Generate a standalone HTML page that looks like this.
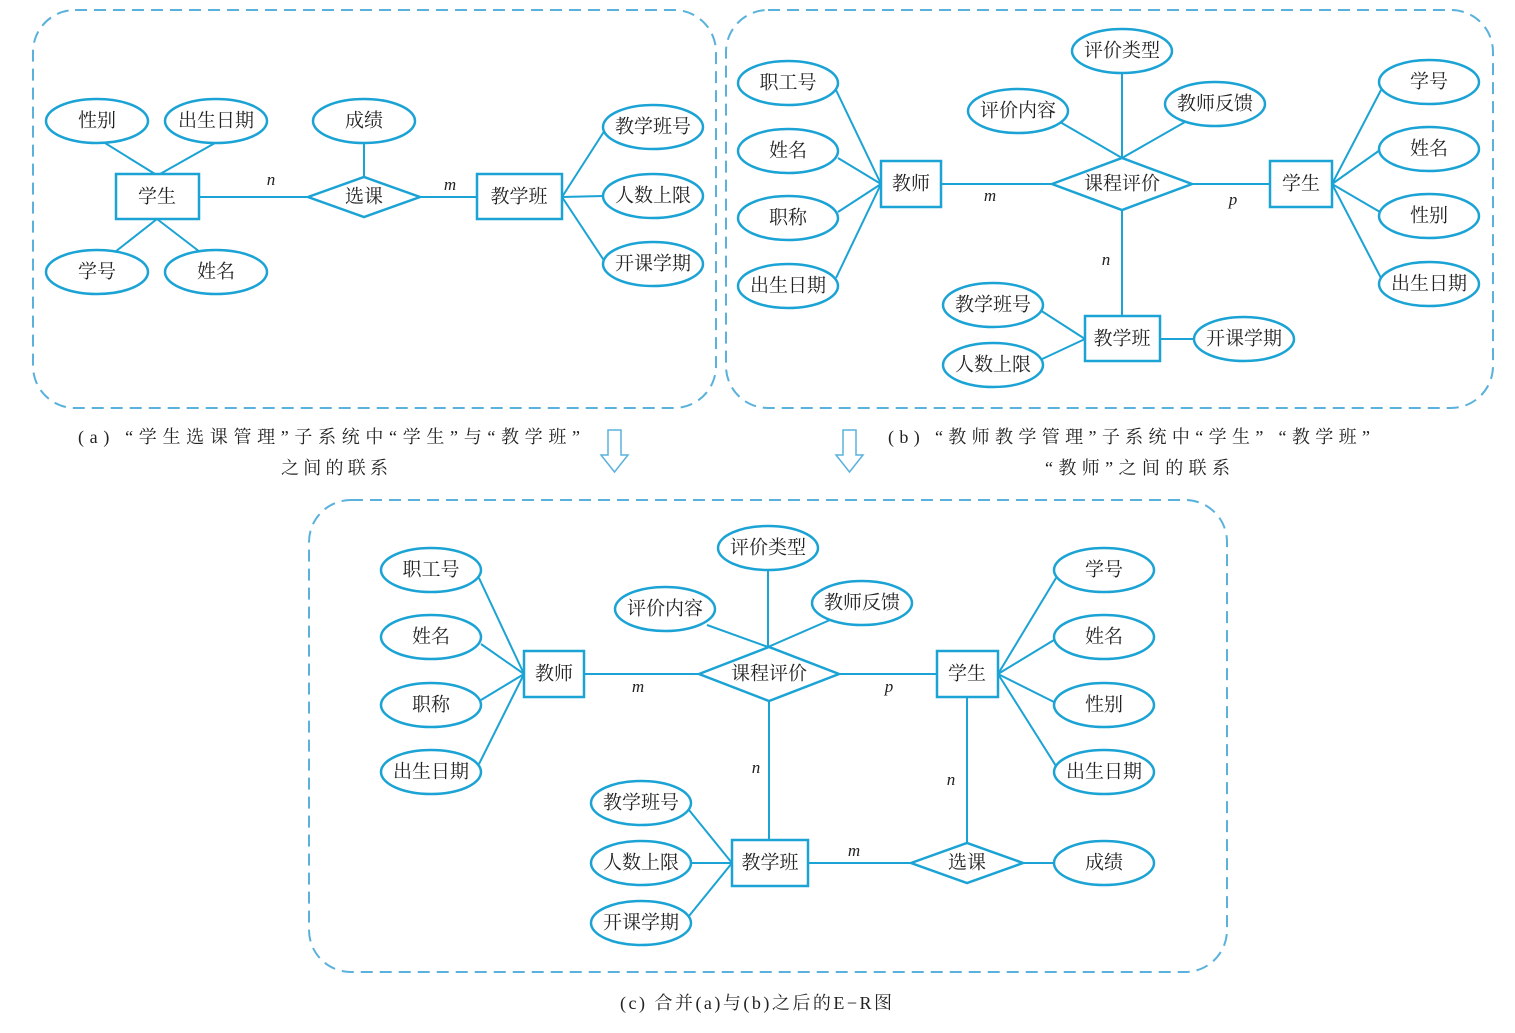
<!DOCTYPE html>
<html><head><meta charset="utf-8"><style>
html,body{margin:0;padding:0;background:#fff;width:1515px;height:1033px;overflow:hidden}
svg{display:block}
text{font-family:"Liberation Serif","Noto Serif CJK SC",serif;fill:#222;font-size:19px}
.l{font-size:19px;text-anchor:middle;dominant-baseline:central}
.i{font-style:italic;font-size:17px;text-anchor:middle}
.c{font-size:18px;font-family:"Liberation Serif","Noto Serif CJK SC",serif}
</style></head><body>
<svg width="1515" height="1033" viewBox="0 0 1515 1033">
<g fill="none" stroke="#5ab2dc" stroke-width="2" stroke-dasharray="12 7">
<rect x="33" y="10" width="683" height="398" rx="42"/>
<rect x="726" y="10" width="767" height="398" rx="42"/>
<rect x="309" y="500" width="918" height="472" rx="42"/>
</g>
<g fill="none" stroke="#1aa3d4" stroke-width="2">
<path d="M105 143L155 174M215 143L160 174M157 219L115 252M157 219L200 252M199 197H308M420 197H477M364 143V177M562 197L605 130M562 197L603 196M562 197L605 262"/>
<path d="M836 90L881 184M838 158L881 184M838 212L881 184M836 278L881 184M941 184H1052M1192 184H1270M1122 73V158M1060 122L1122 158M1185 122L1122 158M1332 184L1381 90M1332 184L1380 150M1332 184L1380 212M1332 184L1381 278M1122 210V316M1040 310L1085 339M1040 360L1085 339M1160 339H1194"/>
<path d="M479 578L524 674M481 644L524 674M481 700L524 674M479 764L524 674M584 674H699M839 674H937M768 570V647M707 625L768 647M830 620L768 647M998 674L1056 578M998 674L1054 640M998 674L1054 702M998 674L1056 766M769 701V840M967 697V843M689 810L732 863M691 863H732M689 916L732 863M808 863H911M1023 863H1054"/>
</g>
<g fill="#fff" stroke="#1aa3d4" stroke-width="2.5">
<ellipse cx="97" cy="121" rx="51" ry="22"/><ellipse cx="216" cy="121" rx="51" ry="22"/>
<ellipse cx="97" cy="272" rx="51" ry="22"/><ellipse cx="216" cy="272" rx="51" ry="22"/>
<ellipse cx="364" cy="121" rx="51" ry="22"/>
<rect x="116" y="174" width="83" height="45"/>
<polygon points="308,197 364,177 420,197 364,217"/>
<rect x="477" y="174" width="85" height="45"/>
<ellipse cx="653" cy="127" rx="50" ry="22"/><ellipse cx="653" cy="196" rx="50" ry="22"/><ellipse cx="653" cy="264" rx="50" ry="22"/>

<ellipse cx="788" cy="83" rx="50" ry="22"/><ellipse cx="788" cy="151" rx="50" ry="22"/><ellipse cx="788" cy="218" rx="50" ry="22"/><ellipse cx="788" cy="286" rx="50" ry="22"/>
<rect x="881" y="161" width="60" height="46"/>
<polygon points="1052,184 1122,158 1192,184 1122,210"/>
<ellipse cx="1122" cy="51" rx="50" ry="22"/><ellipse cx="1018" cy="111" rx="50" ry="22"/><ellipse cx="1215" cy="104" rx="50" ry="22"/>
<rect x="1270" y="161" width="62" height="46"/>
<ellipse cx="1429" cy="82" rx="50" ry="22"/><ellipse cx="1429" cy="149" rx="50" ry="22"/><ellipse cx="1429" cy="216" rx="50" ry="22"/><ellipse cx="1429" cy="284" rx="50" ry="22"/>
<rect x="1085" y="316" width="75" height="45"/>
<ellipse cx="993" cy="305" rx="50" ry="22"/><ellipse cx="993" cy="365" rx="50" ry="22"/><ellipse cx="1244" cy="339" rx="50" ry="22"/>

<ellipse cx="431" cy="570" rx="50" ry="22"/><ellipse cx="431" cy="637" rx="50" ry="22"/><ellipse cx="431" cy="705" rx="50" ry="22"/><ellipse cx="431" cy="772" rx="50" ry="22"/>
<rect x="524" y="651" width="60" height="46"/>
<polygon points="699,674 769,647 839,674 769,701"/>
<ellipse cx="768" cy="548" rx="50" ry="22"/><ellipse cx="665" cy="609" rx="50" ry="22"/><ellipse cx="862" cy="603" rx="50" ry="22"/>
<rect x="937" y="651" width="61" height="46"/>
<ellipse cx="1104" cy="570" rx="50" ry="22"/><ellipse cx="1104" cy="637" rx="50" ry="22"/><ellipse cx="1104" cy="705" rx="50" ry="22"/><ellipse cx="1104" cy="772" rx="50" ry="22"/>
<rect x="732" y="840" width="76" height="46"/>
<ellipse cx="641" cy="803" rx="50" ry="22"/><ellipse cx="641" cy="863" rx="50" ry="22"/><ellipse cx="641" cy="923" rx="50" ry="22"/>
<polygon points="911,863 967,843 1023,863 967,883"/>
<ellipse cx="1104" cy="863" rx="50" ry="22"/>
</g>
<g fill="#fff" stroke="#5ab2dc" stroke-width="1.5">
<polygon points="608,430 621,430 621,455 628,455 614.5,472 601,455 608,455"/>
<polygon points="843,430 856,430 856,455 863,455 849.5,472 836,455 843,455"/>
</g>
<g>
<text class="l" x="97" y="121">性别</text><text class="l" x="216" y="121">出生日期</text>
<text class="l" x="97" y="272">学号</text><text class="l" x="216" y="272">姓名</text>
<text class="l" x="364" y="121">成绩</text><text class="l" x="157" y="197">学生</text>
<text class="l" x="364" y="197">选课</text><text class="l" x="519" y="197">教学班</text>
<text class="l" x="653" y="127">教学班号</text><text class="l" x="653" y="196">人数上限</text><text class="l" x="653" y="264">开课学期</text>
<text class="i" x="271" y="185">n</text><text class="i" x="450" y="190">m</text>

<text class="l" x="788" y="83">职工号</text><text class="l" x="788" y="151">姓名</text><text class="l" x="788" y="218">职称</text><text class="l" x="788" y="286">出生日期</text>
<text class="l" x="911" y="184">教师</text><text class="l" x="1122" y="184">课程评价</text>
<text class="l" x="1122" y="51">评价类型</text><text class="l" x="1018" y="111">评价内容</text><text class="l" x="1215" y="104">教师反馈</text>
<text class="l" x="1301" y="184">学生</text>
<text class="l" x="1429" y="82">学号</text><text class="l" x="1429" y="149">姓名</text><text class="l" x="1429" y="216">性别</text><text class="l" x="1429" y="284">出生日期</text>
<text class="l" x="1122" y="339">教学班</text>
<text class="l" x="993" y="305">教学班号</text><text class="l" x="993" y="365">人数上限</text><text class="l" x="1244" y="339">开课学期</text>
<text class="i" x="990" y="201">m</text><text class="i" x="1233" y="205">p</text><text class="i" x="1106" y="265">n</text>

<text class="l" x="431" y="570">职工号</text><text class="l" x="431" y="637">姓名</text><text class="l" x="431" y="705">职称</text><text class="l" x="431" y="772">出生日期</text>
<text class="l" x="554" y="674">教师</text><text class="l" x="769" y="674">课程评价</text>
<text class="l" x="768" y="548">评价类型</text><text class="l" x="665" y="609">评价内容</text><text class="l" x="862" y="603">教师反馈</text>
<text class="l" x="967" y="674">学生</text>
<text class="l" x="1104" y="570">学号</text><text class="l" x="1104" y="637">姓名</text><text class="l" x="1104" y="705">性别</text><text class="l" x="1104" y="772">出生日期</text>
<text class="l" x="770" y="863">教学班</text>
<text class="l" x="641" y="803">教学班号</text><text class="l" x="641" y="863">人数上限</text><text class="l" x="641" y="923">开课学期</text>
<text class="l" x="967" y="863">选课</text><text class="l" x="1104" y="863">成绩</text>
<text class="i" x="638" y="692">m</text><text class="i" x="889" y="692">p</text><text class="i" x="756" y="773">n</text><text class="i" x="854" y="856">m</text><text class="i" x="951" y="785">n</text>
</g>
<text class="c" x="78" y="443" textLength="502" lengthAdjust="spacing">(a) “学生选课管理”子系统中“学生”与“教学班”</text>
<text class="c" x="281" y="474" textLength="107" lengthAdjust="spacing">之间的联系</text>
<text class="c" x="888" y="443" textLength="482" lengthAdjust="spacing">(b) “教师教学管理”子系统中“学生” “教学班”</text>
<text class="c" x="1045" y="474" textLength="185" lengthAdjust="spacing">“教师”之间的联系</text>
<text class="c" x="620" y="1009" textLength="272" lengthAdjust="spacing">(c) 合并(a)与(b)之后的E−R图</text>
</svg>
</body></html>
